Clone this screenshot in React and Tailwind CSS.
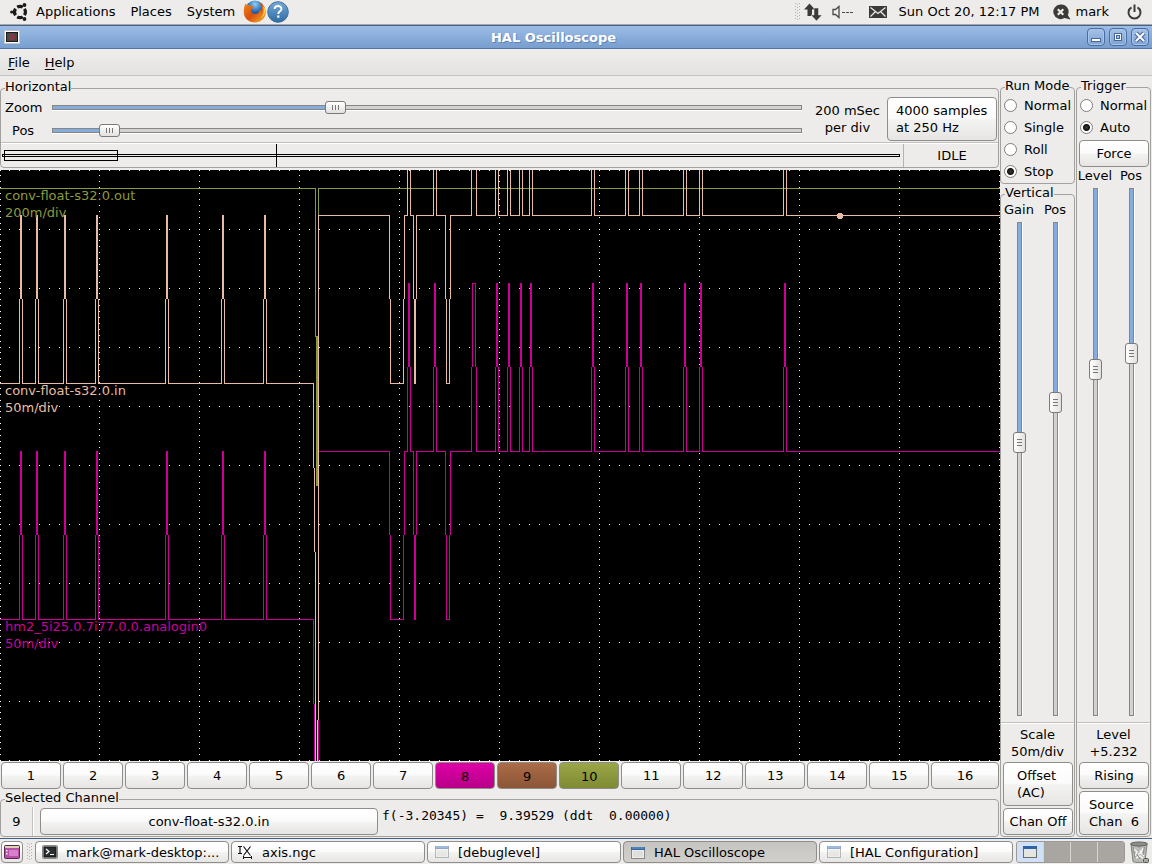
import React from "react";

const SPIKES = [19, 35, 63, 95, 165, 221, 263];

// Events after the step: [kind, first column, last column]
const EVENTS = [
  ["down", 389, 404],
  ["up", 407, 410],
  ["down", 413, 416],
  ["up", 433, 436],
  ["down", 445, 450],
  ["up", 471, 476],
  ["up", 495, 498],
  ["up", 507, 510],
  ["up", 519, 522],
  ["up", 529, 532],
  ["up", 591, 594],
  ["up", 625, 628],
  ["up", 639, 642],
  ["up", 683, 686],
  ["up", 699, 702],
  ["up", 783, 786],
];

const toPath = (points) =>
  "M" + points.map(([x, y]) => `${x + 0.5} ${y + 0.5}`).join("L");

function pulse(a, b, from, to) {
  const mid = (from + to) / 2;
  const near = from > to ? mid : mid - 1;
  const far = from > to ? mid - 1 : mid;
  return [
    [a, from],
    [a, near],
    [a + 1, far],
    [a + 1, to],
    [b - 1, to],
    [b - 1, far],
    [b, near],
    [b, from],
  ];
}

function signal(low, high) {
  const before = [[-1, low]];
  SPIKES.forEach((a) => before.push(...pulse(a, a + 3, low, high)));
  before.push([313, low], [313, low + 84], [314, low + 85], [314, low + 168], [315, low + 169], [315, 600]);
  const after = [[317, 600], [317, high + 505], [318, high + 504], [318, high]];
  EVENTS.forEach(([kind, a, b]) =>
    after.push(...pulse(a, b, high, kind === "up" ? high - 168 : low))
  );
  after.push([1000, high]);
  return toPath(before) + toPath(after);
}

const OLIVE = toPath([[-1, 18], [315, 18], [315, 166], [316, 166], [316, 315], [317, 315], [317, 166], [318, 165], [318, 18], [1000, 18]]);
const MAGENTA = toPath([[-1, 449], ...SPIKES.flatMap((a) => pulse(a, a + 3, 449, 281)), [313, 449], [313, 533], [314, 534], [314, 600]]) +
  toPath([[318, 600], [318, 281], ...EVENTS.flatMap(([k, a, b]) => pulse(a, b, 281, k === "up" ? 113 : 449)), [1000, 281]]);
const PEACH = signal(213, 45);

const DOTS = (() => {
  let d = "";
  for (let row = 0; row <= 10; row++)
    for (let x = 9; x < 1000; x += 10) d += `M${x} ${row * 59}h1v1h-1z`;
  for (let col = 0; col <= 10; col++)
    for (let i = 0; i <= 100; i++)
      d += `M${Math.max(0, col * 100 - 1)} ${Math.floor(i * 5.9)}h1v1h-1z`;
  return d;
})();

const LABELS = [
  { name: "conv-float-s32.0.out", scale: "200m/div", y: 17, color: "text-[#8c9a3c]" },
  { name: "conv-float-s32.0.in", scale: "50m/div", y: 212, color: "text-[#e8bba3]" },
  { name: "hm2_5i25.0.7i77.0.0.analogin0", scale: "50m/div", y: 448, color: "text-[#cc0099]" },
];

const FACE =
  "border border-[#8f8d89] rounded-[4px] bg-[linear-gradient(#ffffff,#fbfbfb_48%,#f3f3f2_52%,#e6e5e3)]";

function Button({ className = "", children }) {
  return (
    <button type="button" className={`${FACE} leading-[17px] ${className}`}>
      {children}
    </button>
  );
}

function Frame({ title, className = "", children }) {
  return (
    <fieldset className={`min-w-0 rounded-[4px] border border-[#a3a19e] ${className}`}>
      <legend className="ml-1 h-[21px] leading-[17px] whitespace-nowrap">{title}</legend>
      {children}
    </fieldset>
  );
}

function HSlider({ id, value }) {
  return (
    <input
      id={id}
      type="range"
      min="0"
      max="1000"
      defaultValue={value}
      style={{ "--fill": `${value / 10}%` }}
      className="block h-[13px] w-full min-w-0 appearance-none bg-transparent [&::-webkit-slider-runnable-track]:h-[5px] [&::-webkit-slider-runnable-track]:border [&::-webkit-slider-runnable-track]:border-[#888683] [&::-webkit-slider-runnable-track]:bg-[linear-gradient(90deg,#86acdd_var(--fill),#d3d2d0_var(--fill))] [&::-webkit-slider-runnable-track]:shadow-[0_1px_0_#ffffff] [&::-webkit-slider-thumb]:-mt-[5px] [&::-webkit-slider-thumb]:h-[13px] [&::-webkit-slider-thumb]:w-[21px] [&::-webkit-slider-thumb]:appearance-none [&::-webkit-slider-thumb]:rounded-[3px] [&::-webkit-slider-thumb]:border [&::-webkit-slider-thumb]:border-[#7c7a77] [&::-webkit-slider-thumb]:bg-[linear-gradient(90deg,#777_1px,transparent_1px,transparent_3px,#777_3px,#777_4px,transparent_4px,transparent_6px,#777_6px),linear-gradient(#ffffff,#e2e1df)] [&::-webkit-slider-thumb]:bg-[length:7px_5px,100%_100%] [&::-webkit-slider-thumb]:bg-center [&::-webkit-slider-thumb]:bg-no-repeat"
    />
  );
}

function VSlider({ id, value }) {
  return (
    <input
      id={id}
      type="range"
      min="0"
      max="1000"
      defaultValue={value}
      style={{ "--fill": `${value / 10}%` }}
      className="block min-h-0 w-[13px] flex-1 self-center appearance-none bg-transparent [writing-mode:vertical-lr] [&::-webkit-slider-runnable-track]:w-[5px] [&::-webkit-slider-runnable-track]:border [&::-webkit-slider-runnable-track]:border-[#888683] [&::-webkit-slider-runnable-track]:bg-[linear-gradient(180deg,#86acdd_var(--fill),#d3d2d0_var(--fill))] [&::-webkit-slider-runnable-track]:shadow-[1px_0_0_#ffffff] [&::-webkit-slider-thumb]:-ml-[5px] [&::-webkit-slider-thumb]:h-[21px] [&::-webkit-slider-thumb]:w-[13px] [&::-webkit-slider-thumb]:appearance-none [&::-webkit-slider-thumb]:rounded-[3px] [&::-webkit-slider-thumb]:border [&::-webkit-slider-thumb]:border-[#7c7a77] [&::-webkit-slider-thumb]:bg-[linear-gradient(180deg,#777_1px,transparent_1px,transparent_3px,#777_3px,#777_4px,transparent_4px,transparent_6px,#777_6px),linear-gradient(90deg,#ffffff,#e2e1df)] [&::-webkit-slider-thumb]:bg-[length:5px_7px,100%_100%] [&::-webkit-slider-thumb]:bg-center [&::-webkit-slider-thumb]:bg-no-repeat"
    />
  );
}

function SliderColumn({ id, label, value }) {
  return (
    <div className="flex w-9 flex-col gap-1">
      <label htmlFor={id} className="flex justify-center whitespace-nowrap leading-[17px]">
        {label}
      </label>
      <VSlider id={id} value={value} />
    </div>
  );
}

function Radio({ name, label, checked }) {
  return (
    <label className="flex h-[22px] items-center gap-[7px] pl-[3px] whitespace-nowrap">
      <input
        type="radio"
        name={name}
        defaultChecked={checked}
        className="size-[13px] shrink-0 appearance-none rounded-full border border-[#7f7d7a] bg-white checked:bg-[radial-gradient(circle,#3a3a3a_0,#111_3px,#ffffff_4px)]"
      />
      {label}
    </label>
  );
}

const Line = ({ className = "" }) => (
  <div className={`h-[2px] border-t border-b border-t-[#c2c0bd] border-b-white ${className}`} />
);

function Grip() {
  return (
    <svg width="5" height="18" className="shrink-0" fill="#b3b1ae" aria-hidden="true">
      {[0, 3, 6, 9, 12, 15].map((y) => (
        <path key={y} d={`M0 ${y}h1v1h-1zM2 ${y + 1}h1v1h-1zM4 ${y}h1v1h-1z`} />
      ))}
    </svg>
  );
}

function WindowIcon({ faded }) {
  return (
    <svg width="16" height="16" viewBox="0 0 16 16" className="shrink-0" opacity={faded ? 0.55 : 1} aria-hidden="true">
      <rect x="1.5" y="2.5" width="13" height="11" fill="#eeeeec" stroke="#888a85" />
      <rect x="1" y="2" width="14" height="3" fill="#3465a4" />
      <path d="M2 3h12" stroke="#729fcf" />
      <rect x="3" y="6" width="10" height="6" fill="#dfe0dc" />
    </svg>
  );
}

function TerminalIcon() {
  return (
    <svg width="16" height="16" viewBox="0 0 16 16" className="shrink-0" aria-hidden="true">
      <rect x="0.5" y="1.5" width="15" height="13" rx="1" fill="#d3d7cf" stroke="#888a85" />
      <rect x="2" y="3" width="12" height="10" fill="#2a2e30" stroke="#111" />
      <path d="M4 5l3 2.5L4 10M8 10.500h4" fill="none" stroke="#fff" strokeWidth="1.200" />
    </svg>
  );
}

function AxisIcon() {
  return (
    <svg width="16" height="16" viewBox="0 0 16 16" className="shrink-0" aria-hidden="true">
      <path d="M5 2l8 10M13 2L5 12M5 13h9" fill="none" stroke="#fff" strokeWidth="3.500" />
      <path d="M0 2.500h4M2 2v8M0 9.500h4" fill="none" stroke="#111" strokeWidth="1.200" />
      <path d="M5.500 2.500l7 9M12.500 2.500l-7 9" fill="none" stroke="#111" strokeWidth="1.200" />
      <path d="M5 13.500h9M5.500 12v3M13.500 12v3" fill="none" stroke="#111" />
    </svg>
  );
}

function TopPanel() {
  return (
    <header className="flex h-[25px] shrink-0 items-center border-b border-[#a9a7a3] bg-[#edeceb] pl-[10px] pr-[10px] pb-px">
      <svg width="18" height="20" viewBox="0 0 18 20" className="shrink-0" aria-hidden="true">
        <g fill="none" stroke="#1a1a18" strokeWidth="3.200">
          <path d="M12.800 5.100A5.500 5.500 0 0 0 7.200 5.200" />
          <path d="M5.600 6.700A5.500 5.500 0 0 0 5.600 13.300" />
          <path d="M7.200 14.800A5.500 5.500 0 0 0 12.800 14.900" />
          <path d="M14.400 6.900A5.500 5.500 0 0 1 14.400 13.100" />
        </g>
        <g fill="#1a1a18">
          <circle cx="1.700" cy="10" r="1.600" />
          <circle cx="14.500" cy="3" r="1.900" />
          <circle cx="14.500" cy="17" r="1.900" />
        </g>
      </svg>
      <nav className="flex gap-[15px] pl-2">
        <button type="button">Applications</button>
        <button type="button">Places</button>
        <button type="button">System</button>
      </nav>
      <button type="button" aria-label="Firefox" className="ml-2 shrink-0">
        <svg width="23" height="23" viewBox="0 0 23 23">
          <defs>
            <radialGradient id="globe" cx="0.500" cy="0.200" r="0.800">
              <stop offset="0" stopColor="#8fd0f5" />
              <stop offset="0.500" stopColor="#2467b0" />
              <stop offset="1" stopColor="#0b2a66" />
            </radialGradient>
            <linearGradient id="fox" x1="0" y1="0" x2="1" y2="1">
              <stop offset="0" stopColor="#f08a1c" />
              <stop offset="0.500" stopColor="#d9500d" />
              <stop offset="1" stopColor="#f7b52c" />
            </linearGradient>
          </defs>
          <circle cx="12" cy="10" r="9.500" fill="url(#globe)" />
          <path d="M2.500 3.500C3 5 4.500 5 6 5.200c2 .3 3 1.300 4.500 1.500-.2 1.800-2 2.200-2.700 3 .2 3 2.700 4.800 5.200 4.300 2.500-.5 3.800-2.500 3.500-5 1 .8 1.500 1.500 1.700 2.500.8-3.500-.2-6.500-2.200-9 5 2.200 7 6 6.700 10.500-.5 5.500-5 9.500-10.700 9.500C5.500 22.500.8 18 .8 12c0-3.500.4-5.800 1.700-8.500z" fill="url(#fox)" />
          <path d="M19.500 6c2 4 1.500 9-2 12 3-1 5-4.500 4.800-8-.3-1.600-1.300-3-2.800-4z" fill="#fbd24a" />
        </svg>
      </button>
      <button type="button" aria-label="Help" className="ml-px shrink-0">
        <svg width="22" height="22" viewBox="0 0 22 22">
          <defs>
            <linearGradient id="help" x1="0" y1="0" x2="0" y2="1">
              <stop offset="0" stopColor="#76a9d6" />
              <stop offset="1" stopColor="#2e6ba5" />
            </linearGradient>
          </defs>
          <circle cx="11" cy="11" r="10.300" fill="url(#help)" stroke="#3c719f" />
          <path d="M7.500 8c.2-2 1.600-3 3.500-3s3.500 1.100 3.500 2.900c0 2.400-3.200 2.500-3.200 5" fill="none" stroke="#fff" strokeWidth="1.900" />
          <rect x="10.200" y="14.500" width="2.200" height="2.200" fill="#fff" />
        </svg>
      </button>
      <div className="ml-auto flex items-center">
        <Grip />
        <svg width="18" height="18" viewBox="0 0 18 18" className="ml-1" fill="#3c3b37" aria-hidden="true">
          <path d="M5.500 0.500l5.500 6H8V13H3.500V6.500H0z" />
          <path d="M12.500 18l-5.500-6h3V5h4.500v7H18z" stroke="#edeceb" strokeWidth="0.500" />
        </svg>
        <svg width="22" height="14" viewBox="0 0 22 14" className="ml-[10px]" fill="none" stroke="#4b4a46" aria-hidden="true">
          <path d="M1 4.500h2.500L7 1.500v11L3.500 9.500H1z" strokeWidth="1.300" />
          <path d="M10 7.500h3M14 7.500h3M18 7.500h3" />
        </svg>
        <svg width="18" height="12" viewBox="0 0 18 12" className="ml-[15px]" aria-hidden="true">
          <rect width="18" height="12" fill="#3c3b37" />
          <path d="M1.500 1.500L9 7.500l7.500-6M1.500 10.500l5-5M16.500 10.500l-5-5" fill="none" stroke="#edeceb" strokeWidth="1.200" />
        </svg>
        <span className="ml-3 whitespace-nowrap">Sun Oct 20, 12:17 PM</span>
        <svg width="18" height="16" viewBox="0 0 18 16" className="ml-[14px]" aria-hidden="true">
          <path d="M7.500.5a7.300 7.300 0 1 0 4 13.500l6 1.500-2.700-4.500A7.300 7.300 0 0 0 7.500.5z" fill="#3c3b37" />
          <path d="M4.800 5.300l5.500 5.500M10.300 5.300l-5.500 5.500" stroke="#edeceb" strokeWidth="2.200" />
        </svg>
        <span className="ml-1">mark</span>
        <button type="button" aria-label="Power" className="ml-[18px]">
          <svg width="15" height="16" viewBox="0 0 15 16" fill="none" stroke="#3c3b37" strokeWidth="2">
            <path d="M4.500 3.300a6 6 0 1 0 6 0M7.500 0.500v7.500" />
          </svg>
        </button>
      </div>
    </header>
  );
}

function TitleButton({ label, children }) {
  return (
    <button
      type="button"
      aria-label={label}
      className="size-[18px] rounded-[4px] border border-[#4a6d9c] bg-[linear-gradient(#a5c1e6,#7ea3d3)] shadow-[inset_0_0_0_1px_#a9c5ea]"
    >
      <svg width="16" height="16" viewBox="0 0 16 16" className="block">
        {children}
      </svg>
    </button>
  );
}

function TitleBar() {
  return (
    <div className="flex h-6 shrink-0 items-center border-t border-b border-t-[#44628c] border-b-[#4f77ae] bg-[linear-gradient(#9cbce6,#789ecf)] pr-[3px] pl-1">
      <svg width="16" height="14" viewBox="0 0 16 14" className="shrink-0" aria-hidden="true">
        <rect x="0.500" y="0.500" width="15" height="13" fill="#ffffff" stroke="#c9c7c3" />
        <rect x="2.500" y="2.500" width="11" height="9" fill="#48484a" stroke="#1c1c1c" />
        <circle cx="8" cy="7" r="2.500" fill="none" stroke="#b8323a" />
        <path d="M6.500 5.500l3 3" stroke="#b8323a" />
      </svg>
      <h1 className="flex-1 text-center font-bold text-white [text-shadow:1px_1px_0_#5f83b5]">HAL Oscilloscope</h1>
      <div className="flex gap-1">
        <TitleButton label="Minimize">
          <rect x="3.500" y="9.500" width="9" height="3" fill="#fff" stroke="#44669a" />
        </TitleButton>
        <TitleButton label="Maximize">
          <rect x="4" y="4" width="8" height="8" fill="#44669a" />
          <rect x="5" y="5" width="6" height="6" fill="#f4f8fd" />
          <rect x="6.500" y="6.500" width="3" height="3" fill="#a5c1e6" stroke="#44669a" />
        </TitleButton>
        <TitleButton label="Close">
          <path d="M4 4l8 8M12 4l-8 8" stroke="#44669a" strokeWidth="4" />
          <path d="M4 4l8 8M12 4l-8 8" stroke="#fff" strokeWidth="2" />
        </TitleButton>
      </div>
    </div>
  );
}

function Horizontal() {
  return (
    <Frame title="Horizontal" className="mr-px">
      <div className="-mt-[3px] flex items-center pr-px">
        <div className="grid min-w-0 flex-1 grid-cols-[47px_1fr] items-center pl-1 leading-[23px]">
          <label htmlFor="h-zoom">Zoom</label>
          <HSlider id="h-zoom" value={374} />
          <label htmlFor="h-pos" className="pl-[7px]">Pos</label>
          <HSlider id="h-pos" value={63} />
        </div>
        <p className="w-[85px] pl-[6px] text-center leading-[17px]">
          200 mSec
          <br />
          per div
        </p>
        <Button className="h-11 w-[110px] shrink-0 pl-2 text-left">
          4000 samples
          <br />
          at 250 Hz
        </Button>
      </div>
      <Line />
      <div className="flex h-[23px]">
        <svg viewBox="0 0 902 23" preserveAspectRatio="none" className="block h-[23px] min-w-0 flex-1" shapeRendering="crispEdges" fill="none" stroke="#000" aria-label="Record position">
          <rect x="1.500" y="10.500" width="897" height="2" />
          <rect x="3.500" y="6.500" width="113" height="10" />
          <path d="M275.500 0v23" />
        </svg>
        <div className="flex w-[95px] items-center justify-center border-l border-[#b5b3b0] pl-[2px]">IDLE</div>
      </div>
    </Frame>
  );
}

function Scope() {
  return (
    <div className="relative mt-[2px] flex min-h-0 flex-1 overflow-hidden bg-black">
      <svg viewBox="0 0 1000 591" preserveAspectRatio="none" className="block min-h-0 w-full min-w-0" shapeRendering="crispEdges" fill="none" role="img" aria-label="Captured traces">
        <path d={DOTS} fill="#fff" />
        <path d={OLIVE} stroke="#8c9a3c" />
        <path d={MAGENTA} stroke="#cc0099" />
        <path d={PEACH} stroke="#e8bba3" />
        <circle cx="840" cy="46" r="3" fill="#e8bba3" />
      </svg>
      {LABELS.map((l) => (
        <div
          key={l.name}
          className={`absolute left-[5px] leading-[17px] ${l.color}`}
          style={{ top: `${(l.y / 591) * 100}%` }}
        >
          {l.name}
          <br />
          {l.scale}
        </div>
      ))}
    </div>
  );
}

const CHANNEL_FACE = {
  8: "bg-[linear-gradient(#dd00a6,#b80089)] pt-[2px]",
  9: "bg-[linear-gradient(#ab6b47,#8b5637)] pt-[2px]",
  10: "bg-[linear-gradient(#9aa647,#7f8a33)] pt-[2px]",
};

function Channels() {
  return (
    <div className="mt-px flex gap-[2px] px-px">
      {Array.from({ length: 16 }, (_, i) => i + 1).map((n) => (
        <button
          key={n}
          type="button"
          className={`h-[27px] min-w-0 basis-0 rounded-[4px] border border-[#8f8d89] leading-[17px] ${
            n === 16 ? "grow-[68]" : "grow-[60]"
          } ${CHANNEL_FACE[n] || "bg-[linear-gradient(#ffffff,#fbfbfb_48%,#f3f3f2_52%,#e6e5e3)]"}`}
        >
          {n}
        </button>
      ))}
    </div>
  );
}

function SelectedChannel() {
  return (
    <Frame title="Selected Channel" className="mr-px mb-px">
      <div className="-mt-[3px] flex h-[29px]">
        <div className="flex w-[31px] items-center justify-center">9</div>
        <div className="w-[2px] border-l border-r border-l-[#c2c0bd] border-r-white" />
        <Button className="mt-px ml-[6px] h-[27px] w-[338px]">conv-float-s32.0.in</Button>
        <output className="ml-1 font-['DejaVu_Sans_Mono',monospace] leading-[17px] whitespace-pre">
          {"f(-3.20345) =  9.39529 (ddt  0.00000)"}
        </output>
      </div>
    </Frame>
  );
}

function VerticalPanel() {
  return (
    <div className="flex w-[75px] shrink-0 flex-col pt-px pb-px">
      <Frame title="Run Mode">
        <div className="-mt-1 pb-px">
          <Radio name="run" label="Normal" />
          <Radio name="run" label="Single" />
          <Radio name="run" label="Roll" />
          <Radio name="run" label="Stop" checked />
        </div>
      </Frame>
      <Frame title="Vertical" className="flex flex-1 flex-col">
        <div className="-mt-1 flex min-h-0 flex-1 flex-col">
          <div className="flex min-h-0 flex-1">
            <SliderColumn id="v-gain" label="Gain" value={444} />
            <SliderColumn id="v-pos" label="Pos" value={359} />
          </div>
          <Line className="mt-[6px] mb-[2px]" />
          <p className="text-center leading-[17px]">
            Scale
            <br />
            50m/div
          </p>
          <div className="mt-[2px] mr-px mb-px ml-[2px] flex flex-col gap-[2px]">
            <Button className="h-11 pl-[13px] text-left">
              Offset
              <br />
              (AC)
            </Button>
            <Button className="h-[27px] whitespace-nowrap">Chan Off</Button>
          </div>
        </div>
      </Frame>
    </div>
  );
}

function TriggerPanel() {
  return (
    <div className="mx-px flex w-[75px] shrink-0 flex-col pt-px pb-px">
      <Frame title="Trigger" className="flex flex-1 flex-col">
        <div className="-mt-1 flex min-h-0 flex-1 flex-col">
          <Radio name="trigger" label="Normal" />
          <Radio name="trigger" label="Auto" checked />
          <Button className="mt-[2px] mr-px ml-[2px] h-[27px]">Force</Button>
          <div className="flex min-h-0 flex-1">
            <SliderColumn id="t-level" label="Level" value={337} />
            <SliderColumn id="t-pos" label="Pos" value={305} />
          </div>
          <Line className="mt-[6px] mb-[2px]" />
          <p className="text-center leading-[17px]">
            Level
            <br />
            +5.232
          </p>
          <div className="mt-[2px] mr-px mb-px ml-[2px] flex flex-col gap-[2px]">
            <Button className="h-[27px]">Rising</Button>
            <Button className="h-11 pl-[9px] text-left whitespace-pre">{"Source\nChan  6"}</Button>
          </div>
        </div>
      </Frame>
    </div>
  );
}

const TASKS = [
  { title: "mark@mark-desktop:...", icon: <TerminalIcon /> },
  { title: "axis.ngc", icon: <AxisIcon /> },
  { title: "[debuglevel]", icon: <WindowIcon faded /> },
  { title: "HAL Oscilloscope", icon: <WindowIcon />, active: true },
  { title: "[HAL Configuration]", icon: <WindowIcon faded /> },
];

function Taskbar() {
  return (
    <footer className="flex h-[26px] shrink-0 items-center border-t border-[#3f5f8c] bg-[#edeceb] pt-px pr-[2px] pl-px">
      <button type="button" aria-label="Show desktop" className={`${FACE} flex h-[22px] w-[22px] shrink-0 items-center justify-center`}>
        <svg width="16" height="14" viewBox="0 0 16 14">
          <rect x="0.500" y="0.500" width="15" height="13" rx="1" fill="#b552a8" stroke="#5e2458" />
          <rect x="1" y="1" width="14" height="2" fill="#d8d4b0" />
          <rect x="5" y="5" width="9" height="6" fill="#d77fcb" />
          <path d="M2 5h1.500v1.500H2zM2 8h1.500v1.500H2z" fill="#fff" />
        </svg>
      </button>
      <div className="ml-1 flex">
        <Grip />
      </div>
      <div className="ml-[3px] flex min-w-0 flex-1 gap-[2px]">
        {TASKS.map((t) => (
          <button
            key={t.title}
            type="button"
            className={`flex h-[22px] min-w-0 flex-1 items-center gap-2 rounded-[4px] border border-[#8f8d89] pl-[6px] leading-[17px] ${
              t.active
                ? "bg-[linear-gradient(#c6c4c1,#d2d0cd)] pt-px"
                : "bg-[linear-gradient(#ffffff,#fbfbfb_48%,#f3f3f2_52%,#e6e5e3)]"
            }`}
          >
            {t.icon}
            <span className="truncate">{t.title}</span>
          </button>
        ))}
      </div>
      <div className="ml-[3px] flex h-[22px] w-[109px] shrink-0 gap-px overflow-hidden rounded-[3px] border border-[#9b9996] bg-[#d6d4d1]">
        <button type="button" aria-label="Workspace 1" className="flex flex-1 items-center justify-center bg-[#cfe0f7]">
          <svg width="14" height="12" viewBox="0 0 14 12">
            <rect x="0.500" y="0.500" width="13" height="11" fill="#e6e6e1" stroke="#6d6d69" />
            <rect x="0" y="0" width="14" height="3" fill="#2f62ad" />
          </svg>
        </button>
        <button type="button" aria-label="Workspace 2" className="flex-1 bg-[#a9a6a2]" />
        <button type="button" aria-label="Workspace 3" className="flex-1 bg-[#a9a6a2]" />
        <button type="button" aria-label="Workspace 4" className="flex-1 bg-[#a9a6a2]" />
      </div>
      <button type="button" aria-label="Trash" className="ml-1 shrink-0">
        <svg width="21" height="22" viewBox="0 0 21 22">
          <path d="M2 3.500l2 17c2 1.500 10 1.500 12 0l2-17z" fill="#b9bab6" stroke="#7e807b" />
          <path d="M5 8l3 3-2 4M9 7l3 4-3 3M14 7l-2 5 3 3M7 17l4-2 4 3" fill="none" stroke="#f2f2f0" strokeWidth="1.500" />
          <path d="M4 6l2 11M10 5v5M15.500 6l-1.500 8M8 13l3 5" fill="none" stroke="#8b8d88" />
          <ellipse cx="10" cy="3" rx="8.500" ry="2" fill="#8d8f8a" stroke="#5f615d" />
          <rect x="14.500" y="17.500" width="5" height="4" rx="1" fill="#a9aaa6" stroke="#555753" />
        </svg>
      </button>
    </footer>
  );
}

export default function App() {
  return (
    <div className="flex h-screen flex-col overflow-hidden bg-[#edeceb] font-['DejaVu_Sans',sans-serif] text-[13px] leading-[17px] text-black">
      <TopPanel />
      <TitleBar />
      <nav className="flex h-[27px] shrink-0 items-center gap-[15px] border-b border-[#c6c4c1] bg-[linear-gradient(#efeeed,#e3e2e0)] pl-2">
        <button type="button"><span className="underline underline-offset-2">F</span>ile</button>
        <button type="button"><span className="underline underline-offset-2">H</span>elp</button>
      </nav>
      <main className="flex min-h-0 flex-1">
        <div className="flex min-w-0 flex-1 flex-col pt-[2px]">
          <Horizontal />
          <Scope />
          <Channels />
          <SelectedChannel />
        </div>
        <VerticalPanel />
        <TriggerPanel />
      </main>
      <Taskbar />
    </div>
  );
}
